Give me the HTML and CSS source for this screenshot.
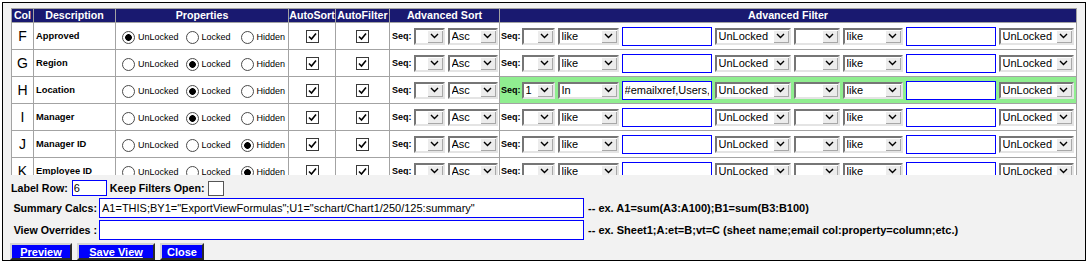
FILE: index.html
```html
<!DOCTYPE html>
<html>
<head>
<meta charset="utf-8">
<link rel="stylesheet" href="styles.css">
</head>
<body>
<div class="frame">
  <div class="grid-wrap">
    <table class="cols">
      <colgroup>
        <col class="c-col"><col class="c-desc"><col class="c-props"><col class="c-as"><col class="c-af"><col class="c-sort"><col class="c-filter">
      </colgroup>
      <thead>
        <tr><th>Col</th><th>Description</th><th>Properties</th><th>AutoSort</th><th>AutoFilter</th><th>Advanced Sort</th><th>Advanced Filter</th></tr>
      </thead>
      <tbody>
        <tr>
          <td class="letter">F</td><td class="desc">Approved</td>
          <td><div class="props"><span class="opt"><span class="rb on"></span>UnLocked</span><span class="opt"><span class="rb"></span>Locked</span><span class="opt"><span class="rb"></span>Hidden</span></div></td>
          <td><span class="cb"><svg width="11" height="11" viewBox="0 0 11 11"><polyline points="2,5.5 4.5,8 9,2.5" fill="none" stroke="#000" stroke-width="1.6"/></svg></span></td>
          <td><span class="cb"><svg width="11" height="11" viewBox="0 0 11 11"><polyline points="2,5.5 4.5,8 9,2.5" fill="none" stroke="#000" stroke-width="1.6"/></svg></span></td>
          <td><div class="sort"><span class="seq">Seq:</span><span class="sel w-sseq"><select><option></option></select><span class="arr"><svg width="9" height="6" viewBox="0 0 9 6"><polyline points="1,1 4.5,4.5 8,1" fill="none" stroke="#000" stroke-width="1.4"/></svg></span></span><span class="sel w-asc"><select><option>Asc</option></select><span class="arr"><svg width="9" height="6" viewBox="0 0 9 6"><polyline points="1,1 4.5,4.5 8,1" fill="none" stroke="#000" stroke-width="1.4"/></svg></span></span></div></td>
          <td><div class="flt"><span class="seq">Seq:</span><span class="sel w-fseq"><select><option></option></select><span class="arr"><svg width="9" height="6" viewBox="0 0 9 6"><polyline points="1,1 4.5,4.5 8,1" fill="none" stroke="#000" stroke-width="1.4"/></svg></span></span><span class="sel w-op"><select><option>like</option></select><span class="arr"><svg width="9" height="6" viewBox="0 0 9 6"><polyline points="1,1 4.5,4.5 8,1" fill="none" stroke="#000" stroke-width="1.4"/></svg></span></span><input class="inp w-val" type="text" value=""><span class="sel w-lock"><select><option>UnLocked</option></select><span class="arr"><svg width="9" height="6" viewBox="0 0 9 6"><polyline points="1,1 4.5,4.5 8,1" fill="none" stroke="#000" stroke-width="1.4"/></svg></span></span><span class="sel w-fseq2"><select><option></option></select><span class="arr"><svg width="9" height="6" viewBox="0 0 9 6"><polyline points="1,1 4.5,4.5 8,1" fill="none" stroke="#000" stroke-width="1.4"/></svg></span></span><span class="sel w-op2"><select><option>like</option></select><span class="arr"><svg width="9" height="6" viewBox="0 0 9 6"><polyline points="1,1 4.5,4.5 8,1" fill="none" stroke="#000" stroke-width="1.4"/></svg></span></span><input class="inp w-val2" type="text" value=""><span class="sel w-lock2"><select><option>UnLocked</option></select><span class="arr"><svg width="9" height="6" viewBox="0 0 9 6"><polyline points="1,1 4.5,4.5 8,1" fill="none" stroke="#000" stroke-width="1.4"/></svg></span></span></div></td>
        </tr>
        <tr>
          <td class="letter">G</td><td class="desc">Region</td>
          <td><div class="props"><span class="opt"><span class="rb"></span>UnLocked</span><span class="opt"><span class="rb on"></span>Locked</span><span class="opt"><span class="rb"></span>Hidden</span></div></td>
          <td><span class="cb"><svg width="11" height="11" viewBox="0 0 11 11"><polyline points="2,5.5 4.5,8 9,2.5" fill="none" stroke="#000" stroke-width="1.6"/></svg></span></td>
          <td><span class="cb"><svg width="11" height="11" viewBox="0 0 11 11"><polyline points="2,5.5 4.5,8 9,2.5" fill="none" stroke="#000" stroke-width="1.6"/></svg></span></td>
          <td><div class="sort"><span class="seq">Seq:</span><span class="sel w-sseq"><select><option></option></select><span class="arr"><svg width="9" height="6" viewBox="0 0 9 6"><polyline points="1,1 4.5,4.5 8,1" fill="none" stroke="#000" stroke-width="1.4"/></svg></span></span><span class="sel w-asc"><select><option>Asc</option></select><span class="arr"><svg width="9" height="6" viewBox="0 0 9 6"><polyline points="1,1 4.5,4.5 8,1" fill="none" stroke="#000" stroke-width="1.4"/></svg></span></span></div></td>
          <td><div class="flt"><span class="seq">Seq:</span><span class="sel w-fseq"><select><option></option></select><span class="arr"><svg width="9" height="6" viewBox="0 0 9 6"><polyline points="1,1 4.5,4.5 8,1" fill="none" stroke="#000" stroke-width="1.4"/></svg></span></span><span class="sel w-op"><select><option>like</option></select><span class="arr"><svg width="9" height="6" viewBox="0 0 9 6"><polyline points="1,1 4.5,4.5 8,1" fill="none" stroke="#000" stroke-width="1.4"/></svg></span></span><input class="inp w-val" type="text" value=""><span class="sel w-lock"><select><option>UnLocked</option></select><span class="arr"><svg width="9" height="6" viewBox="0 0 9 6"><polyline points="1,1 4.5,4.5 8,1" fill="none" stroke="#000" stroke-width="1.4"/></svg></span></span><span class="sel w-fseq2"><select><option></option></select><span class="arr"><svg width="9" height="6" viewBox="0 0 9 6"><polyline points="1,1 4.5,4.5 8,1" fill="none" stroke="#000" stroke-width="1.4"/></svg></span></span><span class="sel w-op2"><select><option>like</option></select><span class="arr"><svg width="9" height="6" viewBox="0 0 9 6"><polyline points="1,1 4.5,4.5 8,1" fill="none" stroke="#000" stroke-width="1.4"/></svg></span></span><input class="inp w-val2" type="text" value=""><span class="sel w-lock2"><select><option>UnLocked</option></select><span class="arr"><svg width="9" height="6" viewBox="0 0 9 6"><polyline points="1,1 4.5,4.5 8,1" fill="none" stroke="#000" stroke-width="1.4"/></svg></span></span></div></td>
        </tr>
        <tr>
          <td class="letter">H</td><td class="desc">Location</td>
          <td><div class="props"><span class="opt"><span class="rb"></span>UnLocked</span><span class="opt"><span class="rb on"></span>Locked</span><span class="opt"><span class="rb"></span>Hidden</span></div></td>
          <td><span class="cb"><svg width="11" height="11" viewBox="0 0 11 11"><polyline points="2,5.5 4.5,8 9,2.5" fill="none" stroke="#000" stroke-width="1.6"/></svg></span></td>
          <td><span class="cb"><svg width="11" height="11" viewBox="0 0 11 11"><polyline points="2,5.5 4.5,8 9,2.5" fill="none" stroke="#000" stroke-width="1.6"/></svg></span></td>
          <td><div class="sort"><span class="seq">Seq:</span><span class="sel w-sseq"><select><option></option></select><span class="arr"><svg width="9" height="6" viewBox="0 0 9 6"><polyline points="1,1 4.5,4.5 8,1" fill="none" stroke="#000" stroke-width="1.4"/></svg></span></span><span class="sel w-asc"><select><option>Asc</option></select><span class="arr"><svg width="9" height="6" viewBox="0 0 9 6"><polyline points="1,1 4.5,4.5 8,1" fill="none" stroke="#000" stroke-width="1.4"/></svg></span></span></div></td>
          <td class="hl"><div class="flt"><span class="seq">Seq:</span><span class="sel w-fseq"><select><option>1</option></select><span class="arr"><svg width="9" height="6" viewBox="0 0 9 6"><polyline points="1,1 4.5,4.5 8,1" fill="none" stroke="#000" stroke-width="1.4"/></svg></span></span><span class="sel w-op"><select><option>In</option></select><span class="arr"><svg width="9" height="6" viewBox="0 0 9 6"><polyline points="1,1 4.5,4.5 8,1" fill="none" stroke="#000" stroke-width="1.4"/></svg></span></span><input class="inp w-val" type="text" value="#emailxref,Users,Email"><span class="sel w-lock"><select><option>UnLocked</option></select><span class="arr"><svg width="9" height="6" viewBox="0 0 9 6"><polyline points="1,1 4.5,4.5 8,1" fill="none" stroke="#000" stroke-width="1.4"/></svg></span></span><span class="sel w-fseq2"><select><option></option></select><span class="arr"><svg width="9" height="6" viewBox="0 0 9 6"><polyline points="1,1 4.5,4.5 8,1" fill="none" stroke="#000" stroke-width="1.4"/></svg></span></span><span class="sel w-op2"><select><option>like</option></select><span class="arr"><svg width="9" height="6" viewBox="0 0 9 6"><polyline points="1,1 4.5,4.5 8,1" fill="none" stroke="#000" stroke-width="1.4"/></svg></span></span><input class="inp w-val2" type="text" value=""><span class="sel w-lock2"><select><option>UnLocked</option></select><span class="arr"><svg width="9" height="6" viewBox="0 0 9 6"><polyline points="1,1 4.5,4.5 8,1" fill="none" stroke="#000" stroke-width="1.4"/></svg></span></span></div></td>
        </tr>
        <tr>
          <td class="letter">I</td><td class="desc">Manager</td>
          <td><div class="props"><span class="opt"><span class="rb"></span>UnLocked</span><span class="opt"><span class="rb on"></span>Locked</span><span class="opt"><span class="rb"></span>Hidden</span></div></td>
          <td><span class="cb"><svg width="11" height="11" viewBox="0 0 11 11"><polyline points="2,5.5 4.5,8 9,2.5" fill="none" stroke="#000" stroke-width="1.6"/></svg></span></td>
          <td><span class="cb"><svg width="11" height="11" viewBox="0 0 11 11"><polyline points="2,5.5 4.5,8 9,2.5" fill="none" stroke="#000" stroke-width="1.6"/></svg></span></td>
          <td><div class="sort"><span class="seq">Seq:</span><span class="sel w-sseq"><select><option></option></select><span class="arr"><svg width="9" height="6" viewBox="0 0 9 6"><polyline points="1,1 4.5,4.5 8,1" fill="none" stroke="#000" stroke-width="1.4"/></svg></span></span><span class="sel w-asc"><select><option>Asc</option></select><span class="arr"><svg width="9" height="6" viewBox="0 0 9 6"><polyline points="1,1 4.5,4.5 8,1" fill="none" stroke="#000" stroke-width="1.4"/></svg></span></span></div></td>
          <td><div class="flt"><span class="seq">Seq:</span><span class="sel w-fseq"><select><option></option></select><span class="arr"><svg width="9" height="6" viewBox="0 0 9 6"><polyline points="1,1 4.5,4.5 8,1" fill="none" stroke="#000" stroke-width="1.4"/></svg></span></span><span class="sel w-op"><select><option>like</option></select><span class="arr"><svg width="9" height="6" viewBox="0 0 9 6"><polyline points="1,1 4.5,4.5 8,1" fill="none" stroke="#000" stroke-width="1.4"/></svg></span></span><input class="inp w-val" type="text" value=""><span class="sel w-lock"><select><option>UnLocked</option></select><span class="arr"><svg width="9" height="6" viewBox="0 0 9 6"><polyline points="1,1 4.5,4.5 8,1" fill="none" stroke="#000" stroke-width="1.4"/></svg></span></span><span class="sel w-fseq2"><select><option></option></select><span class="arr"><svg width="9" height="6" viewBox="0 0 9 6"><polyline points="1,1 4.5,4.5 8,1" fill="none" stroke="#000" stroke-width="1.4"/></svg></span></span><span class="sel w-op2"><select><option>like</option></select><span class="arr"><svg width="9" height="6" viewBox="0 0 9 6"><polyline points="1,1 4.5,4.5 8,1" fill="none" stroke="#000" stroke-width="1.4"/></svg></span></span><input class="inp w-val2" type="text" value=""><span class="sel w-lock2"><select><option>UnLocked</option></select><span class="arr"><svg width="9" height="6" viewBox="0 0 9 6"><polyline points="1,1 4.5,4.5 8,1" fill="none" stroke="#000" stroke-width="1.4"/></svg></span></span></div></td>
        </tr>
        <tr>
          <td class="letter">J</td><td class="desc">Manager ID</td>
          <td><div class="props"><span class="opt"><span class="rb"></span>UnLocked</span><span class="opt"><span class="rb"></span>Locked</span><span class="opt"><span class="rb on"></span>Hidden</span></div></td>
          <td><span class="cb"><svg width="11" height="11" viewBox="0 0 11 11"><polyline points="2,5.5 4.5,8 9,2.5" fill="none" stroke="#000" stroke-width="1.6"/></svg></span></td>
          <td><span class="cb"><svg width="11" height="11" viewBox="0 0 11 11"><polyline points="2,5.5 4.5,8 9,2.5" fill="none" stroke="#000" stroke-width="1.6"/></svg></span></td>
          <td><div class="sort"><span class="seq">Seq:</span><span class="sel w-sseq"><select><option></option></select><span class="arr"><svg width="9" height="6" viewBox="0 0 9 6"><polyline points="1,1 4.5,4.5 8,1" fill="none" stroke="#000" stroke-width="1.4"/></svg></span></span><span class="sel w-asc"><select><option>Asc</option></select><span class="arr"><svg width="9" height="6" viewBox="0 0 9 6"><polyline points="1,1 4.5,4.5 8,1" fill="none" stroke="#000" stroke-width="1.4"/></svg></span></span></div></td>
          <td><div class="flt"><span class="seq">Seq:</span><span class="sel w-fseq"><select><option></option></select><span class="arr"><svg width="9" height="6" viewBox="0 0 9 6"><polyline points="1,1 4.5,4.5 8,1" fill="none" stroke="#000" stroke-width="1.4"/></svg></span></span><span class="sel w-op"><select><option>like</option></select><span class="arr"><svg width="9" height="6" viewBox="0 0 9 6"><polyline points="1,1 4.5,4.5 8,1" fill="none" stroke="#000" stroke-width="1.4"/></svg></span></span><input class="inp w-val" type="text" value=""><span class="sel w-lock"><select><option>UnLocked</option></select><span class="arr"><svg width="9" height="6" viewBox="0 0 9 6"><polyline points="1,1 4.5,4.5 8,1" fill="none" stroke="#000" stroke-width="1.4"/></svg></span></span><span class="sel w-fseq2"><select><option></option></select><span class="arr"><svg width="9" height="6" viewBox="0 0 9 6"><polyline points="1,1 4.5,4.5 8,1" fill="none" stroke="#000" stroke-width="1.4"/></svg></span></span><span class="sel w-op2"><select><option>like</option></select><span class="arr"><svg width="9" height="6" viewBox="0 0 9 6"><polyline points="1,1 4.5,4.5 8,1" fill="none" stroke="#000" stroke-width="1.4"/></svg></span></span><input class="inp w-val2" type="text" value=""><span class="sel w-lock2"><select><option>UnLocked</option></select><span class="arr"><svg width="9" height="6" viewBox="0 0 9 6"><polyline points="1,1 4.5,4.5 8,1" fill="none" stroke="#000" stroke-width="1.4"/></svg></span></span></div></td>
        </tr>
        <tr>
          <td class="letter">K</td><td class="desc">Employee ID</td>
          <td><div class="props"><span class="opt"><span class="rb"></span>UnLocked</span><span class="opt"><span class="rb"></span>Locked</span><span class="opt"><span class="rb on"></span>Hidden</span></div></td>
          <td><span class="cb"><svg width="11" height="11" viewBox="0 0 11 11"><polyline points="2,5.5 4.5,8 9,2.5" fill="none" stroke="#000" stroke-width="1.6"/></svg></span></td>
          <td><span class="cb"><svg width="11" height="11" viewBox="0 0 11 11"><polyline points="2,5.5 4.5,8 9,2.5" fill="none" stroke="#000" stroke-width="1.6"/></svg></span></td>
          <td><div class="sort"><span class="seq">Seq:</span><span class="sel w-sseq"><select><option></option></select><span class="arr"><svg width="9" height="6" viewBox="0 0 9 6"><polyline points="1,1 4.5,4.5 8,1" fill="none" stroke="#000" stroke-width="1.4"/></svg></span></span><span class="sel w-asc"><select><option>Asc</option></select><span class="arr"><svg width="9" height="6" viewBox="0 0 9 6"><polyline points="1,1 4.5,4.5 8,1" fill="none" stroke="#000" stroke-width="1.4"/></svg></span></span></div></td>
          <td><div class="flt"><span class="seq">Seq:</span><span class="sel w-fseq"><select><option></option></select><span class="arr"><svg width="9" height="6" viewBox="0 0 9 6"><polyline points="1,1 4.5,4.5 8,1" fill="none" stroke="#000" stroke-width="1.4"/></svg></span></span><span class="sel w-op"><select><option>like</option></select><span class="arr"><svg width="9" height="6" viewBox="0 0 9 6"><polyline points="1,1 4.5,4.5 8,1" fill="none" stroke="#000" stroke-width="1.4"/></svg></span></span><input class="inp w-val" type="text" value=""><span class="sel w-lock"><select><option>UnLocked</option></select><span class="arr"><svg width="9" height="6" viewBox="0 0 9 6"><polyline points="1,1 4.5,4.5 8,1" fill="none" stroke="#000" stroke-width="1.4"/></svg></span></span><span class="sel w-fseq2"><select><option></option></select><span class="arr"><svg width="9" height="6" viewBox="0 0 9 6"><polyline points="1,1 4.5,4.5 8,1" fill="none" stroke="#000" stroke-width="1.4"/></svg></span></span><span class="sel w-op2"><select><option>like</option></select><span class="arr"><svg width="9" height="6" viewBox="0 0 9 6"><polyline points="1,1 4.5,4.5 8,1" fill="none" stroke="#000" stroke-width="1.4"/></svg></span></span><input class="inp w-val2" type="text" value=""><span class="sel w-lock2"><select><option>UnLocked</option></select><span class="arr"><svg width="9" height="6" viewBox="0 0 9 6"><polyline points="1,1 4.5,4.5 8,1" fill="none" stroke="#000" stroke-width="1.4"/></svg></span></span></div></td>
        </tr>
      </tbody>
    </table>
  </div>
  <div class="controls">
    <div class="row1">
      <span class="lbl">Label Row:</span>
      <input class="inp labelrow" type="text" value="6">
      <span class="lbl keep">Keep Filters Open:</span>
      <span class="bigcb"></span>
    </div>
    <div class="fields">
      <span class="lbl right">Summary Calcs:</span>
      <input class="inp wide" type="text" value="A1=THIS;BY1=&quot;ExportViewFormulas&quot;;U1=&quot;schart/Chart1/250/125:summary&quot;">
      <span class="hint">-- ex. A1=sum(A3:A100);B1=sum(B3:B100)</span>
      <span class="lbl right">View Overrides :</span>
      <input class="inp wide" type="text" value="">
      <span class="hint">-- ex. Sheet1;A:et=B;vt=C (sheet name;email col:property=column;etc.)</span>
    </div>
    <div class="buttons">
      <button class="bb b-prev"><u>Preview</u></button>
      <button class="bb b-save"><u>Save View</u></button>
      <button class="bb b-close">Close</button>
    </div>
  </div>
</div>
</body>
</html>
```

FILE: styles.css
```css
body {
  margin: 0;
  background: #fff;
  font-family: "Liberation Sans", Arial, sans-serif;
}
.frame {
  margin: 2px 0 0 2px;
  width: 1084px;
  height: 259px;
  box-sizing: border-box;
  border: 1px solid #000;
  background: #f2f2f2;
  display: flex;
  flex-direction: column;
}
.grid-wrap {
  flex: none;
  height: 172px;
  overflow: hidden;
  padding: 5px 0 0 8px;
  box-sizing: border-box;
}
table.cols {
  border-collapse: collapse;
  table-layout: fixed;
  width: 1066px;
  background: #fff;
}
.c-col { width: 22px; }
.c-desc { width: 82px; }
.c-props { width: 173px; }
.c-as { width: 47px; }
.c-af { width: 54px; }
.c-sort { width: 110px; }
.c-filter { width: 577px; }

.cols th {
  background: #191970;
  color: #fff;
  font: bold 10.67px "Liberation Sans", Arial, sans-serif;
  height: 13px;
  line-height: 13px;
  padding: 0;
  border: 1px solid #a3a3a3;
  white-space: nowrap;
  overflow: hidden;
}
.cols td {
  border: 1px solid #a3a3a3;
  height: 26px;
  padding: 0 2px;
  font-size: 9px;
  vertical-align: middle;
}
.cols td.letter {
  font-size: 14px;
  text-align: center;
  padding: 0;
}
.cols td.desc {
  font-weight: bold;
  font-size: 9.33px;
  padding-left: 2px;
}
.cols td.hl { background: #90ee90; }

.props {
  display: flex;
  align-items: center;
  padding: 2px 0 0 4px;
}
.opt {
  display: flex;
  align-items: center;
  margin-right: 7px;
  font-size: 9px;
  white-space: nowrap;
}
.opt:nth-child(2) { margin-right: 10px; }
.rb {
  flex: none;
  width: 13px;
  height: 13px;
  box-sizing: border-box;
  border: 1px solid #4a4a4a;
  border-radius: 50%;
  background: #fff;
  margin-right: 3px;
}
.rb.on {
  background: radial-gradient(circle, #000 0 3px, #fff 3.7px);
}
.cb {
  display: flex;
  align-items: center;
  justify-content: center;
  margin: 0 auto;
  width: 13px;
  height: 13px;
  box-sizing: border-box;
  border: 1px solid #3a3a3a;
  background: #fff;
}
.sort {
  display: flex;
  align-items: center;
  gap: 3px;
}
.sort .seq { margin-right: -1px; }
.flt {
  display: flex;
  align-items: center;
  gap: 3px;
  margin-left: -1px;
}
.flt .seq { margin-right: -2px; }
.seq {
  font-weight: bold;
  font-size: 9px;
}
.sel {
  flex: none;
  display: inline-flex;
  height: 17px;
  box-sizing: border-box;
  border: 2px solid;
  border-color: #767676 #e4e4e4 #e4e4e4 #767676;
  background: #fff;
}
.sel select {
  appearance: none;
  -webkit-appearance: none;
  flex: 1;
  min-width: 0;
  border: 0;
  margin: 0;
  padding: 0 0 0 2px;
  background: transparent;
  font: 11px "Liberation Sans", Arial, sans-serif;
  color: #000;
  height: 13px;
  line-height: 13px;
  outline: none;
}
.sel .arr {
  flex: none;
  width: 16px;
  height: 13px;
  background: #ececec;
  box-shadow: inset 1px 1px 0 #fff, inset -1px -1px 0 #a8a8a8;
  display: flex;
  align-items: center;
  justify-content: center;
}
.w-sseq { width: 31px; }
.w-asc { width: 50px; }
.w-fseq { width: 33px; }
.w-op { width: 61px; }
.w-lock { width: 76px; }
.w-fseq2 { width: 46px; }
.w-op2 { width: 60px; }
.w-lock2 { width: 75px; }
.inp {
  flex: none;
  box-sizing: border-box;
  border: 1px solid #0000ff;
  background: #fff;
  font: 11px "Liberation Sans", Arial, sans-serif;
  color: #000;
  padding: 0 2px;
  margin: 0;
  outline: none;
}
.flt .inp { height: 19px; }
.w-val { width: 90px; }
.w-val2 { width: 90px; }

.controls {
  padding: 5px 0 0 7px;
  display: flex;
  flex-direction: column;
}
.lbl {
  font: bold 10.67px "Liberation Sans", Arial, sans-serif;
  white-space: nowrap;
}
.row1 {
  display: flex;
  align-items: center;
  height: 16px;
  margin-left: 1px;
}
.labelrow {
  width: 35px;
  height: 16px;
  margin-left: 4px;
  padding: 0 1px;
}
.keep { margin-left: 3px; }
.bigcb {
  width: 16px;
  height: 15px;
  box-sizing: border-box;
  border: 1px solid #555;
  background: #fff;
  margin-left: 3px;
}
.fields {
  display: grid;
  grid-template-columns: 87px 485px auto;
  column-gap: 2px;
  row-gap: 2px;
  margin-top: 2px;
  align-items: center;
}
.right { text-align: right; }
.wide { height: 20px; width: 485px; }
.hint {
  font: bold 11px "Liberation Sans", Arial, sans-serif;
  margin-left: 2px;
  white-space: nowrap;
}
.buttons {
  display: flex;
  gap: 5px;
  margin-top: 3px;
}
.bb {
  height: 17px;
  box-sizing: border-box;
  background: #0000ff;
  color: #fff;
  font: bold 11px "Liberation Sans", Arial, sans-serif;
  border: 2px solid;
  border-color: #d4d4d4 #2a2a2a #2a2a2a #d4d4d4;
  padding: 0;
  margin: 0;
  line-height: 12px;
}
.b-prev { width: 62px; }
.b-save { width: 78px; }
.b-close { width: 44px; }
```
